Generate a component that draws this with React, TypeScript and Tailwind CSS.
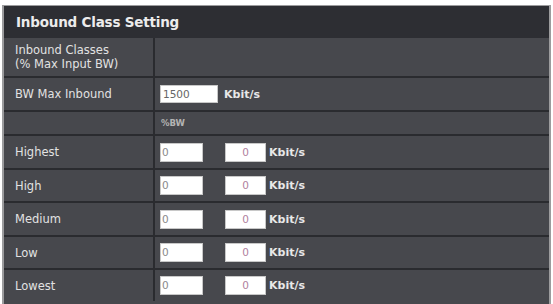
import React from "react";

const font = { fontFamily: '"DejaVu Sans", Verdana, sans-serif' };

function Row({ label, children, h, last }: { label: React.ReactNode; children?: React.ReactNode; h: string; last?: boolean }) {
  return (
    <div className={`flex ${h} ${last ? "" : "border-b-2 border-[#2a2b2f]"}`}>
      <div className="w-[151px] shrink-0 border-r-2 border-[#2a2b2f] flex items-center pl-[11px] text-[11.5px] leading-[14px] text-[#e2e2e2]">
        {label}
      </div>
      <div className="flex-1 flex items-center pl-[5px]">{children}</div>
    </div>
  );
}

function ClassRow({ label, h, last }: { label: string; h: string; last?: boolean }) {
  return (
    <Row label={label} h={h} last={last}>
      <div className="w-[43px] h-[19px] bg-white border border-[#c8c8c8] flex items-center pl-[1px] text-[10.5px] leading-none text-[#8a8a8a]">0</div>
      <div className="ml-[22px] w-[41px] h-[19px] bg-white border border-[#c8c8c8] flex items-center justify-center text-[10.5px] leading-none text-[#b07f9e]">0</div>
      <span className="ml-[3px] text-[11px] font-bold leading-none text-[#e8e8e8]">Kbit/s</span>
    </Row>
  );
}

export default function App() {
  return (
    <div className="w-[553px] h-[304px] bg-white pt-[5px] pl-[2px]" style={font}>
      <div className="w-[549px] h-[299px] border-l-2 border-t border-r-2 border-[#9c9c9e] bg-[#47484d] flex flex-col overflow-hidden">
        <div className="h-[32px] bg-[#2d2e33] flex items-center pl-[12px] shrink-0">
          <span className="text-[13.5px] font-bold text-[#ececec] tracking-[-0.2px]">Inbound Class Setting</span>
        </div>
        <Row h="h-[40px]" label={<span>Inbound Classes<br />(% Max Input BW)</span>} />
        <Row h="h-[34px]" label="BW Max Inbound">
          <div className="w-[58px] h-[18px] bg-white border border-[#c8c8c8] flex items-center pl-[2px] text-[10.5px] leading-none text-[#666]">1500</div>
          <span className="ml-[6px] text-[11px] font-bold leading-none text-[#e8e8e8]">Kbit/s</span>
        </Row>
        <Row h="h-[24px]" label="">
          <span className="text-[8.5px] font-bold text-[#b4b4b4] pl-[1px]">%BW</span>
        </Row>
        <ClassRow label="Highest" h="h-[34px]" />
        <ClassRow label="High" h="h-[33px]" />
        <ClassRow label="Medium" h="h-[34px]" />
        <ClassRow label="Low" h="h-[33px]" />
        <ClassRow label="Lowest" h="h-[31px]" last />
      </div>
    </div>
  );
}
